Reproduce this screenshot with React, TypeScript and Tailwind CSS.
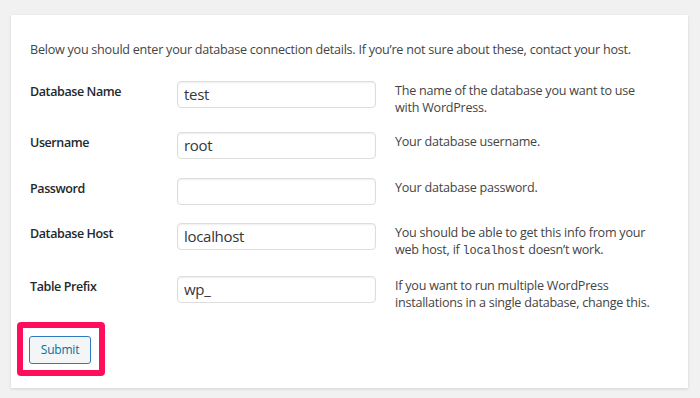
import React from "react";

const font = { fontFamily: '"Open Sans", "Noto Sans", sans-serif' };

function Row({
  label,
  value,
  desc,
  h,
}: {
  label: string;
  value: string;
  desc: React.ReactNode;
  h: string;
}) {
  return (
    <div className={`flex items-start ${h}`}>
      <div className="w-[147px] text-[12.5px] leading-[19px] pt-[1px] font-semibold text-[#23282d] tracking-[-0.4px]">
        {label}
      </div>
      <div className="w-[199px] h-[27px] border border-[#dddddd] rounded-[4px] shadow-[inset_0_1px_2px_rgba(0,0,0,0.07)] bg-white flex items-center pl-[6px] text-[15px] text-[#32373c] tracking-[-0.3px]">
        {value}
      </div>
      <div className="ml-[19px] text-[12.6px] leading-[17px] text-[#444] whitespace-nowrap tracking-[-0.25px] pt-[1px]">
        {desc}
      </div>
    </div>
  );
}

export default function App() {
  return (
    <div
      className="w-[700px] h-[398px] bg-[#f1f1f1] pt-[15px] pl-[11px] overflow-hidden"
      style={font}
    >
      <div className="w-[677px] h-[373px] bg-white shadow-[0_1px_3px_rgba(0,0,0,0.13)] pl-[19px] pt-[25px]">
        <p className="text-[12.6px] leading-[19px] text-[#444] whitespace-nowrap tracking-[-0.25px]">
          Below you should enter your database connection details. If you’re not
          sure about these, contact your host.
        </p>
        <div className="mt-[22px] flex flex-col">
          <Row
            label="Database Name"
            value="test"
            h="h-[51px]"
            desc={
              <>
                The name of the database you want to use
                <br />
                with WordPress.
              </>
            }
          />
          <Row
            label="Username"
            value="root"
            h="h-[46px]"
            desc="Your database username."
          />
          <Row
            label="Password"
            value=""
            h="h-[45px]"
            desc="Your database password."
          />
          <Row
            label="Database Host"
            value="localhost"
            h="h-[53px]"
            desc={
              <>
                You should be able to get this info from your
                <br />
                web host, if{" "}
                <code
                  className="text-[12px] text-[#444]"
                  style={{ fontFamily: '"Liberation Mono", monospace' }}
                >
                  localhost
                </code>{" "}
                doesn’t work.
              </>
            }
          />
          <Row
            label="Table Prefix"
            value="wp_"
            h="h-[46px]"
            desc={
              <>
                If you want to run multiple WordPress
                <br />
                installations in a single database, change this.
              </>
            }
          />
        </div>
        <div className="-ml-[13px] inline-block border-[6px] border-[#ff0f5b] rounded-[4px] pl-[6px] pt-[8px] pr-[8px] pb-[6px]">
          <button
            className="w-[62px] h-[28px] border border-[#2e7bbf] rounded-[3px] bg-[#f3f5f6] text-[12px] text-[#0071a1] tracking-[-0.2px] flex items-center justify-center"
            style={font}
          >
            Submit
          </button>
        </div>
      </div>
    </div>
  );
}
